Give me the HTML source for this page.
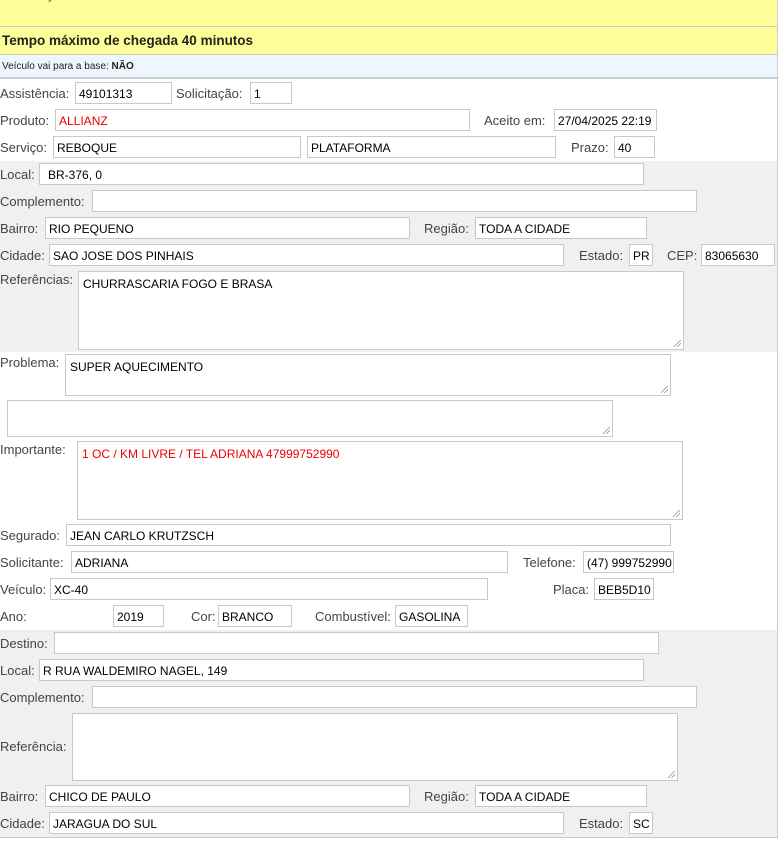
<!DOCTYPE html><html><head><meta charset="utf-8"><style>
body{margin:0;width:781px;height:861px;background:#fff;position:relative;overflow:hidden;font-family:"Liberation Sans",sans-serif}
div{position:absolute;box-sizing:border-box}
.l{font-size:13px;color:#444;line-height:24px}
.i{border:1px solid #c8c8c8;background:#fff;font-size:12px;color:#000;padding:1px 0 0 3px;line-height:20px;height:22px;white-space:nowrap;overflow:hidden}
.t{border:1px solid #c8c8c8;background:#fff;font-size:12px;color:#000;padding:5px 4px;line-height:14px}
.t::after{content:"";position:absolute;right:2px;bottom:2px;width:7px;height:7px;background:linear-gradient(135deg,transparent 45%,#888 45%,#888 52%,transparent 52%,transparent 70%,#888 70%,#888 77%,transparent 77%)}
.r{color:#e00}
.g{background:#f0f0f0}
</style></head><body>
<div style="left:0;top:0;width:778px;height:27px;background:#ffff99;border-right:1px solid #ccc;border-bottom:1px solid #ccc"></div>
<div style="left:6px;top:-12px;font-size:12px;color:#c00;font-weight:bold">ELEVAÇÃO DE VEÍCULO - CARRO DA ALLIANZ</div>
<div style="left:0;top:27px;width:778px;height:28px;background:#ffff99;border-right:1px solid #ccc;border-bottom:1px solid #ccc;font-weight:bold;font-size:13.5px;color:#222;padding:6px 0 0 2px">Tempo máximo de chegada 40 minutos</div>
<div style="left:0;top:55px;width:778px;height:24px;background:#eef6ff;border-right:1px solid #ccc;border-bottom:2px solid #ccc;font-size:10px;color:#222;padding:6px 0 0 2px">Veículo vai para a base: <b>NÃO</b></div>
<div style="left:777px;top:79px;width:1px;height:760px;background:#ccc"></div>
<div class="g" style="left:0;top:161px;width:777px;height:191px"></div>
<div class="g" style="left:0;top:630px;width:777px;height:207px"></div>
<div style="left:0;top:837px;width:778px;height:1px;background:#ccc"></div>

<div class="l" style="left:0;top:82px">Assistência:</div><div class="i" style="left:75px;top:82px;width:97px">49101313</div>
<div class="l" style="left:176px;top:82px">Solicitação:</div><div class="i" style="left:250px;top:82px;width:42px">1</div>
<div class="l" style="left:0;top:109px">Produto:</div><div class="i r" style="left:55px;top:109px;width:415px">ALLIANZ</div>
<div class="l" style="left:484px;top:109px">Aceito em:</div><div class="i" style="left:554px;top:109px;width:103px">27/04/2025 22:19</div>
<div class="l" style="left:0;top:136px">Serviço:</div><div class="i" style="left:53px;top:136px;width:248px">REBOQUE</div><div class="i" style="left:307px;top:136px;width:249px">PLATAFORMA</div>
<div class="l" style="left:571px;top:136px">Prazo:</div><div class="i" style="left:614px;top:136px;width:41px">40</div>

<div class="l" style="left:0;top:163px">Local:</div><div class="i" style="left:39px;top:163px;width:605px;padding-left:8px">BR-376, 0</div>
<div class="l" style="left:0;top:190px">Complemento:</div><div class="i" style="left:92px;top:190px;width:605px"></div>
<div class="l" style="left:0;top:217px">Bairro:</div><div class="i" style="left:45px;top:217px;width:365px">RIO PEQUENO</div>
<div class="l" style="left:424px;top:217px">Região:</div><div class="i" style="left:475px;top:217px;width:172px">TODA A CIDADE</div>
<div class="l" style="left:0;top:244px">Cidade:</div><div class="i" style="left:49px;top:244px;width:515px">SAO JOSE DOS PINHAIS</div>
<div class="l" style="left:579px;top:244px">Estado:</div><div class="i" style="left:629px;top:244px;width:24px">PR</div>
<div class="l" style="left:667px;top:244px">CEP:</div><div class="i" style="left:701px;top:244px;width:74px">83065630</div>
<div class="l" style="left:0;top:268px">Referências:</div><div class="t" style="left:78px;top:271px;width:606px;height:79px">CHURRASCARIA FOGO E BRASA</div>

<div class="l" style="left:0;top:351px">Problema:</div><div class="t" style="left:65px;top:354px;width:606px;height:42px">SUPER AQUECIMENTO</div>
<div class="t" style="left:7px;top:400px;width:606px;height:37px"></div>
<div class="l" style="left:0;top:438px">Importante:</div><div class="t r" style="left:77px;top:441px;width:606px;height:79px">1 OC / KM LIVRE / TEL ADRIANA 47999752990</div>
<div class="l" style="left:0;top:524px">Segurado:</div><div class="i" style="left:66px;top:524px;width:605px">JEAN CARLO KRUTZSCH</div>
<div class="l" style="left:0;top:551px">Solicitante:</div><div class="i" style="left:71px;top:551px;width:437px">ADRIANA</div>
<div class="l" style="left:523px;top:551px">Telefone:</div><div class="i" style="left:583px;top:551px;width:91px">(47) 999752990</div>
<div class="l" style="left:0;top:578px">Veículo:</div><div class="i" style="left:50px;top:578px;width:438px">XC-40</div>
<div class="l" style="left:553px;top:578px">Placa:</div><div class="i" style="left:594px;top:578px;width:60px">BEB5D10</div>
<div class="l" style="left:0;top:605px">Ano:</div><div class="i" style="left:113px;top:605px;width:51px">2019</div>
<div class="l" style="left:191px;top:605px">Cor:</div><div class="i" style="left:218px;top:605px;width:74px">BRANCO</div>
<div class="l" style="left:315px;top:605px">Combustível:</div><div class="i" style="left:395px;top:605px;width:73px">GASOLINA</div>

<div class="l" style="left:0;top:632px">Destino:</div><div class="i" style="left:54px;top:632px;width:605px"></div>
<div class="l" style="left:0;top:659px">Local:</div><div class="i" style="left:39px;top:659px;width:605px">R RUA WALDEMIRO NAGEL, 149</div>
<div class="l" style="left:0;top:686px">Complemento:</div><div class="i" style="left:92px;top:686px;width:605px"></div>
<div class="l" style="left:0;top:735px">Referência:</div><div class="t" style="left:72px;top:713px;width:606px;height:68px"></div>
<div class="l" style="left:0;top:785px">Bairro:</div><div class="i" style="left:45px;top:785px;width:365px">CHICO DE PAULO</div>
<div class="l" style="left:424px;top:785px">Região:</div><div class="i" style="left:475px;top:785px;width:172px">TODA A CIDADE</div>
<div class="l" style="left:0;top:812px">Cidade:</div><div class="i" style="left:49px;top:812px;width:515px">JARAGUA DO SUL</div>
<div class="l" style="left:579px;top:812px">Estado:</div><div class="i" style="left:629px;top:812px;width:24px">SC</div>
</body></html>
